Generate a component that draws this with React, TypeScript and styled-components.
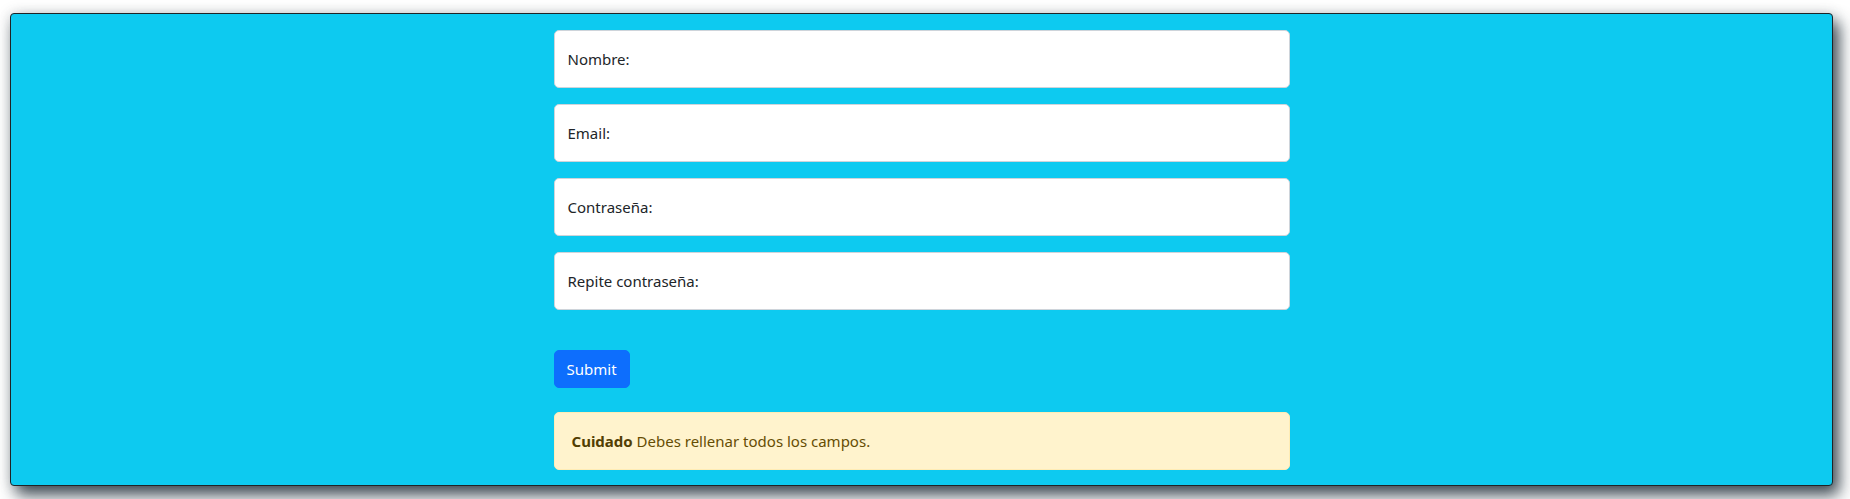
import styled, { createGlobalStyle } from "styled-components";

const GlobalStyle = createGlobalStyle`
  * {
    box-sizing: border-box;
  }
  body {
    margin: 0;
    background: #ffffff;
    font-family: "Segoe UI", "Noto Sans", "Open Sans", sans-serif;
    font-size: 16px;
    line-height: 1.5;
    color: #212529;
  }
`;

const Page = styled.div`
  padding: 13px 17px 13px 10px;
`;

const Card = styled.section`
  background: #0dcaf0;
  border: 1px solid #1f2326;
  border-radius: 4px;
  padding: 16px 0 15px;
  box-shadow: 6px 9px 16px rgba(30, 45, 55, 0.85), 0 0 14px rgba(60, 70, 80, 0.18);
`;

const Form = styled.form`
  width: 736px;
  margin: 0 auto;
  display: flex;
  flex-direction: column;
  align-items: flex-start;
`;

const Field = styled.label`
  width: 100%;
  height: 58px;
  display: flex;
  align-items: center;
  gap: 6px;
  padding: 0 13px;
  margin-bottom: 16px;
  background: #ffffff;
  border: 1px solid #ced4da;
  border-radius: 5px;
  font-size: 15px;
  color: #212529;
`;

const FieldInput = styled.input`
  flex: 1;
  border: none;
  outline: none;
  background: transparent;
  font: inherit;
`;

const SubmitButton = styled.button`
  margin-top: 24px;
  height: 38px;
  width: 76px;
  padding: 0 12px;
  border: 1px solid #0d6efd;
  border-radius: 5px;
  background: #0d6efd;
  color: #ffffff;
  font-family: inherit;
  font-size: 15px;
`;

const Alert = styled.div`
  width: 100%;
  margin-top: 24px;
  padding: 16px 17px;
  height: 58px;
  background: #fff3cd;
  border: 1px solid #ffecb5;
  border-radius: 5px;
  color: #664d03;
  font-size: 15px;
  line-height: 24px;
`;

const Strong = styled.strong`
  font-weight: 700;
  color: #523e02;
`;

const fields = ["Nombre:", "Email:", "Contraseña:", "Repite contraseña:"];

const inputType = (label: string) =>
  label.startsWith("Email") ? "email" : label.toLowerCase().includes("contra") ? "password" : "text";

export default function App() {
  return (
    <>
      <GlobalStyle />
      <Page>
        <Card>
          <Form onSubmit={(e) => e.preventDefault()}>
            {fields.map((f) => (
              <Field key={f}>
                {f}
                <FieldInput type={inputType(f)} />
              </Field>
            ))}
            <SubmitButton type="submit">Submit</SubmitButton>
            <Alert>
              <Strong>Cuidado</Strong> Debes rellenar todos los campos.
            </Alert>
          </Form>
        </Card>
      </Page>
    </>
  );
}
